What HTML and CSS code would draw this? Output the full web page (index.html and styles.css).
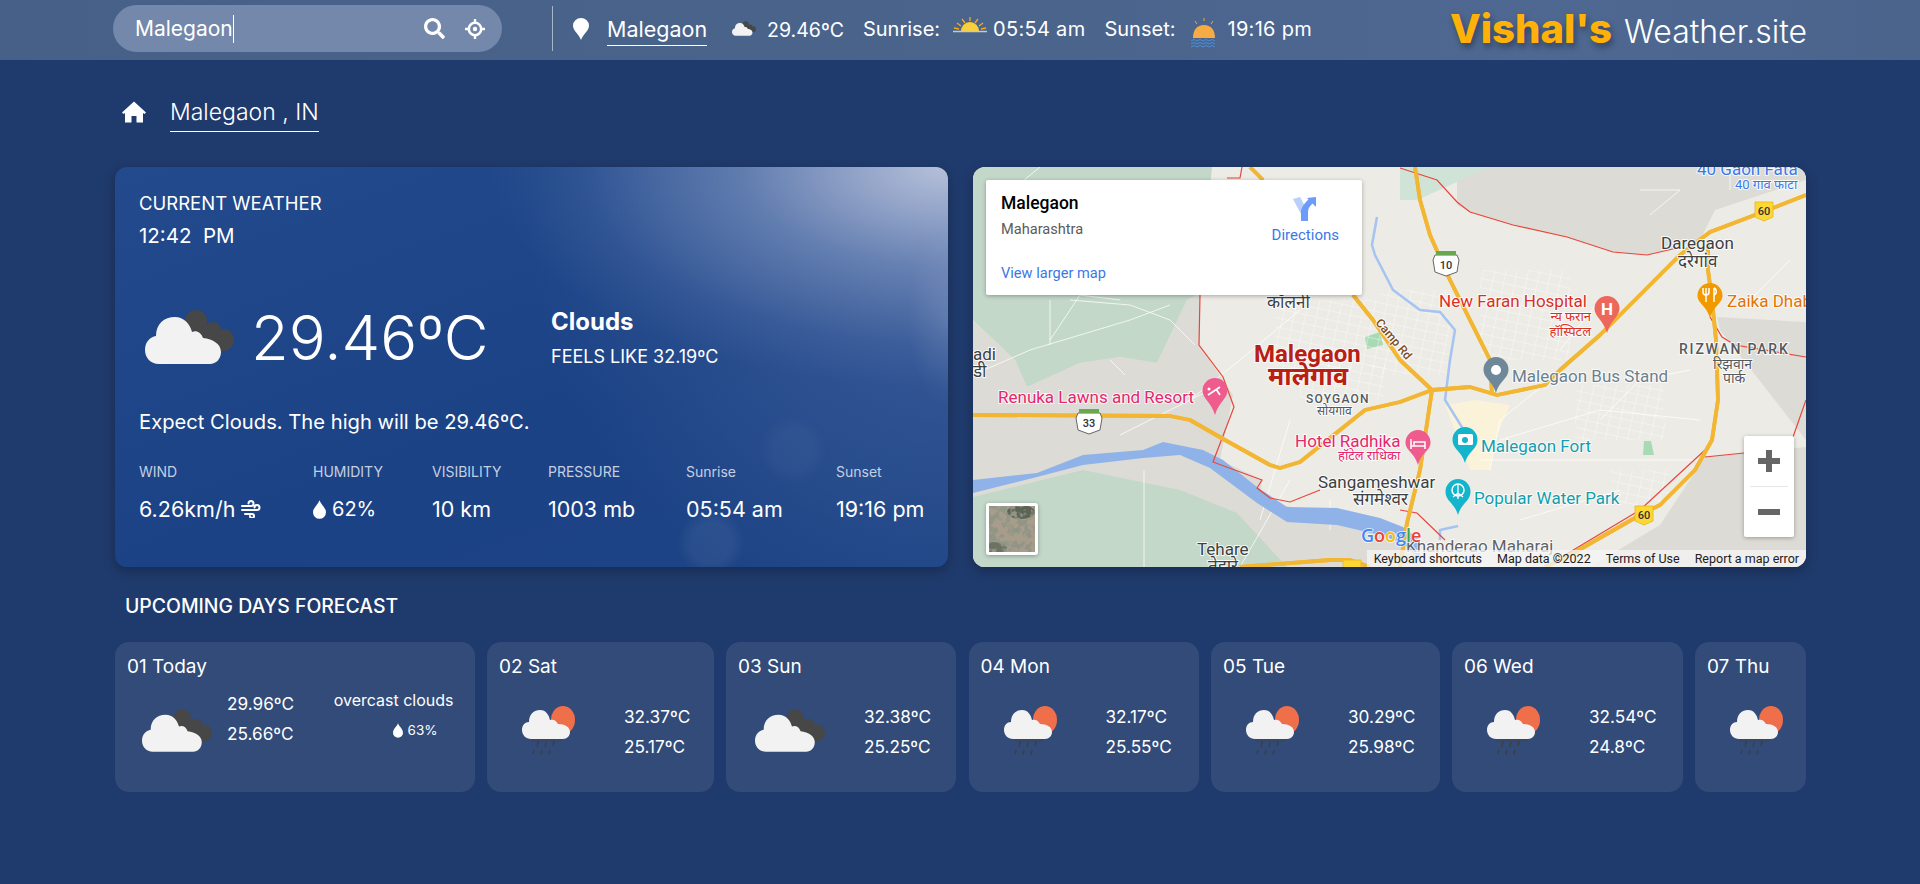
FILE: index.html
```html
<!DOCTYPE html>
<html lang="en">

<head>
    <meta charset="UTF-8">
    <meta name="viewport" content="width=device-width, initial-scale=1.0">
    <title>Vishal's Weather.site</title>
    <link rel="stylesheet" href="styles.css">
</head>

<body>

    <!-- Iconos reutilizados -->
    <svg class="defs" width="0" height="0">
        <symbol id="ic-clouds" viewBox="0 0 89 54">
            <g fill="#474747">
                <circle cx="51" cy="11" r="11"/>
                <circle cx="68" cy="20" r="8"/>
                <circle cx="78" cy="30" r="11"/>
                <circle cx="60" cy="30" r="14"/>
            </g>
            <path fill="#f2f2f2" d="M14 54C5 54 0 47 0 40c0-8 5-13 11-14C11 14 19 7 30 7c9 0 15 7 17 15 4-2 9 0 11 6 10 1 18 6 18 14 0 7-5 12-11 12z"/>
        </symbol>
        <symbol id="ic-rain" viewBox="0 0 53 50">
            <ellipse cx="41" cy="14" rx="12" ry="14" fill="#ef6f4a"/>
            <path fill="#f2f2f2" d="M9 33c-5 0-9-4-9-9 0-5 3-8 7-8C7 8 12 4 18 4c6 0 9 5 10 10 3-1 6 0 8 4 7 0 12 3 12 8 0 4-3 7-7 7z"/>
            <path fill="#3f4656" opacity=".55" d="M8 33h33l-3 3H11z"/>
            <path stroke="#3d3f45" stroke-width="1.500" fill="none" d="M16 35l-1 6M24 36l-1 5M32 35l-1 5M12 44l-1 4M20 44l-1 5M28 44l-1 5"/>
        </symbol>
        <symbol id="ic-drop" viewBox="0 0 14 20">
            <path fill="#fff" d="M7 0c1 4 7 8 7 13a7 7 0 0 1-14 0C0 8 6 4 7 0z"/>
        </symbol>
    </svg>

    <header class="topbar">
        <div class="search">
            <span class="search-text">Malegaon</span><span class="caret"></span>
            <svg class="search-ic" viewBox="0 0 512 512"><path fill="#fff" d="M505 442.7L405.3 343c-4.5-4.5-10.6-7-17-7H372c27.6-35.3 44-79.7 44-128C416 93.1 322.9 0 208 0S0 93.1 0 208s93.1 208 208 208c48.3 0 92.7-16.4 128-44v16.3c0 6.4 2.5 12.5 7 17l99.7 99.7c9.4 9.4 24.6 9.4 33.9 0l28.3-28.3c9.4-9.4 9.4-24.6.1-34zM208 336c-70.7 0-128-57.2-128-128 0-70.7 57.2-128 128-128 70.7 0 128 57.2 128 128 0 70.7-57.2 128-128 128z"/></svg>
            <svg class="locate-ic" viewBox="0 0 20 20"><circle cx="10" cy="10" r="6.2" fill="none" stroke="#fff" stroke-width="2.6"/><circle cx="10" cy="10" r="2.2" fill="#fff"/><path stroke="#fff" stroke-width="2.4" d="M10 0v4M10 16v4M0 10h4M16 10h4"/></svg>
        </div>
        <div class="divider"></div>
        <svg class="pin-ic" viewBox="0 0 16 22"><path fill="#fff" d="M8 22C6 16 0 13 0 7.500a8 7.500 0 0 1 16 0C16 13 10 16 8 22z"/></svg>
        <span class="top-city">Malegaon</span>
        <svg class="top-cloud"><use href="#ic-clouds"/></svg>
        <span class="top-temp">29.46ºC</span>
        <span class="top-label sunrise-label">Sunrise:</span>
        <svg class="sunrise-ic" viewBox="0 0 34 17">
            <path stroke="#f6a81c" stroke-width="1.300" d="M17 1v4M9 3l3 4M25 3l-3 4M4 7l4 3M30 7l-4 3M1 12l5 1M33 12l-5 1"/>
            <path fill="#fbcf3a" d="M8 15a9 9 0 0 1 18 0z"/>
            <path stroke="#c9c9b8" stroke-width="1.300" d="M0 15.500h34"/>
        </svg>
        <span class="top-label sunrise-time">05:54 am</span>
        <span class="top-label sunset-label">Sunset:</span>
        <svg class="sunset-ic" viewBox="0 0 28 31">
            <path stroke="#f2a33a" stroke-width="1" d="M14 0v3M5 3l2 3M23 3l-2 3"/>
            <path fill="#f7ab45" d="M3 20c0-8 4-13 11-13s11 5 11 13z"/>
            <path fill="none" stroke="#4a8fd8" stroke-width="1" d="M1 23l3-1.500 3 1.500 3-1.500 3 1.500 3-1.500 3 1.500 3-1.500 3 1.500M1 26l3-1.500 3 1.500 3-1.500 3 1.500 3-1.500 3 1.500 3-1.500 3 1.500M1 29l3-1.500 3 1.500 3-1.500 3 1.500 3-1.500 3 1.500 3-1.500 3 1.500"/>
        </svg>
        <span class="top-label sunset-time">19:16 pm</span>
        <div class="logo"><b>Vishal's</b> <span>Weather.site</span></div>
    </header>

    <main class="wrap">
        <div class="place">
            <svg class="home-ic" viewBox="0 0 24 24"><path fill="#fff" d="M12 1.500L0 12.500l1.500 1.500L3 13v9.500h6.500V16h5v6.500H21V13l1.500 1 1.500-1.500z"/></svg>
            <span class="place-name">Malegaon , IN</span>
        </div>

        <div class="top-grid">
            <section class="current">
                <div class="current-head">CURRENT WEATHER</div>
                <div class="current-time">12:42&nbsp; PM</div>
                <div class="current-main">
                    <svg class="current-ic"><use href="#ic-clouds"/></svg>
                    <div class="current-temp">29.46ºC</div>
                    <div class="current-desc">
                        <div class="desc-title">Clouds</div>
                        <div class="desc-feels">FEELS LIKE 32.19ºC</div>
                    </div>
                </div>
                <p class="expect">Expect Clouds. The high will be 29.46ºC.</p>
                <div class="stats">
                    <div class="stat stat-wind">
                        <div class="stat-label">WIND</div>
                        <div class="stat-value">6.26km/h
                            <svg class="wind-ic" viewBox="0 0 20 18"><path fill="none" stroke="#fff" stroke-width="2" stroke-linecap="round" d="M1 6h9a2.500 2.500 0 1 0-2.500-2.500M1 10h15a2.500 2.500 0 1 0-2.500-2.500M4 14h7a2 2 0 1 1-2 2"/></svg>
                        </div>
                    </div>
                    <div class="stat stat-hum">
                        <div class="stat-label">HUMIDITY</div>
                        <div class="stat-value stat-hum-value"><svg class="drop-ic"><use href="#ic-drop"/></svg>62%</div>
                    </div>
                    <div class="stat stat-vis">
                        <div class="stat-label">VISIBILITY</div>
                        <div class="stat-value">10 km</div>
                    </div>
                    <div class="stat stat-pres">
                        <div class="stat-label">PRESSURE</div>
                        <div class="stat-value">1003 mb</div>
                    </div>
                    <div class="stat stat-rise">
                        <div class="stat-label">Sunrise</div>
                        <div class="stat-value">05:54 am</div>
                    </div>
                    <div class="stat">
                        <div class="stat-label">Sunset</div>
                        <div class="stat-value">19:16 pm</div>
                    </div>
                </div>
            </section>

            <section class="map">
                <svg class="map-canvas" viewBox="973 167 833 400">
                    <defs>
                        <pattern id="streets" width="11" height="9" patternUnits="userSpaceOnUse" patternTransform="rotate(12)">
                            <path d="M0 0h11M0 0v9" stroke="#fff" stroke-width="1" fill="none"/>
                        </pattern>
                    </defs>
                    <rect x="973" y="167" width="833" height="400" fill="#ecebe5"/>

                    <!-- Zonas de terreno -->
                    <path class="land" d="M973 320L1015 360 1027 387 1080 363 1120 357 1157 363 1187 300 1200 293 1199 345 1233 395 1220 460 1262 480 1260 500 1350 520 1400 530 1425 567H973z"/>
                    <path class="land" d="M1457 167L1457 205 1470 212 1513 225 1567 237 1613 252 1647 255 1700 240 1715 210 1806 180V167z"/>
                    <path class="land" d="M1717 317L1806 322V440L1720 330z"/>
                    <path class="land" d="M1590 567L1660 525 1705 457 1806 447V567z"/>
                    <path class="green" d="M973 167H1212L1200 293 1187 300 1157 363 1120 357 1080 363 1027 387 1015 360 973 320z"/>
                    <path class="green" d="M973 497L1083 470 1180 490 1237 513 1287 567H973z"/>
                    <path class="green-light" d="M1400 167H1490L1417 200H1400z"/>
                    <path class="green-park" d="M1365 337L1380 332 1383 345 1367 349zM1644 441H1651L1654 455H1643z"/>
                    <path class="town" d="M1445 405L1475 400 1510 405 1495 440 1490 470 1470 470 1455 430z"/>

                    <!-- Calles: trama y trazos sueltos -->
                    <rect class="grid" x="1275" y="300" width="105" height="70"/>
                    <rect class="grid" x="1300" y="365" width="85" height="35"/>
                    <rect class="grid" x="1380" y="290" width="70" height="85"/>
                    <rect class="grid" x="1480" y="270" width="90" height="90"/>
                    <rect class="grid" x="1575" y="385" width="90" height="55"/>
                    <rect class="grid" x="1610" y="470" width="60" height="35"/>
                    <path class="minor" d="M973 375L1030 350 1130 320 1170 305M1050 300V345M1070 300L1130 305 1170 320 1195 345M1080 295L1050 340M1190 400L1240 360 1300 310M1110 360L1125 375M1210 390L1170 410 1120 435M1144 470V567M1290 480L1240 567M1290 420L1260 520M1330 500V530M1500 440L1600 410 1700 420M1480 460H1700M1550 380L1500 420 1490 470M1600 300L1560 350M1690 370L1640 380 1600 420M1650 215L1680 190 1640 190M1750 300L1790 260M1730 190V167M1520 520L1620 490M1040 167L1000 200M1000 190H1130M1080 295L1120 300"/>
                    <path class="river-thin" d="M1377 217L1372 245 1375 255 1393 290 1420 310 1440 312 1455 330 1450 360 1445 400 1470 440"/>
                    <path class="river-thin" d="M1440 540L1440 530 1458 526"/>
                    <path class="river" d="M973 480L1037 473 1083 455 1143 450 1163 442 1203 450 1223 460 1257 487 1287 507 1337 508 1380 518 1403 527 1420 540 1420 560 1403 543 1380 535 1337 525 1287 522 1257 503 1210 468 1180 455 1143 458 1083 465 1037 477 973 493z"/>

                    <!-- Límites en rojo -->
                    <path class="limit" d="M1242 167L1240 178H1227M1200 295L1199 345 1223 377 1234 407 1213 462 1262 480 1257 488 1270 498 1290 502 1320 490"/>
                    <path class="limit" d="M1400 168L1437 180 1457 202 1470 212 1513 225 1567 237 1613 252 1647 255 1677 248M1710 317L1722 337 1735 345 1806 357M1705 457L1744 453M1793 437L1806 400M1400 510L1417 513 1445 540M1545 567L1640 510 1705 450"/>

                    <!-- Carreteras: borde naranja y centro claro -->
                    <g id="roads" class="roads">
                        <path d="M973 415L1170 416 1190 420 1225 440 1270 465 1280 468 1300 462 1365 410 1400 402 1432 390 1470 387 1497 395 1545 385 1560 370 1600 335 1680 255 1710 232 1755 215 1806 195"/>
                        <path d="M1708 240L1708 270 1712 300 1716 340 1718 400 1712 440 1695 470 1660 505 1640 515 1570 555 1545 567"/>
                        <path d="M1415 167L1420 200 1430 235 1450 280 1470 320 1490 360 1492 395"/>
                        <path d="M1250 167L1263 180M1353 295L1373 320 1400 360 1432 390 1420 470 1407 523 1400 567"/>
                        <path d="M1240 567L1330 560 1350 560 1370 567"/>
                    </g>
                    <use href="#roads" class="roads-inner"/>

                    <!-- Placas de carretera -->
                    <g class="shield-white">
                        <path d="M1078 413h22l2 5-2 12-11 4-11-4-2-12z"/>
                        <path class="shield-top" d="M1079 409h20v4h-20z"/>
                        <text x="1089" y="427">33</text>
                    </g>
                    <g class="shield-white">
                        <path d="M1435 255h22l2 5-2 12-11 4-11-4-2-12z"/>
                        <path class="shield-top" d="M1436 251h20v4h-20z"/>
                        <text x="1446" y="269">10</text>
                    </g>
                    <g class="shield-yellow">
                        <path d="M1755 202h18v15l-9 4-9-4z"/>
                        <text x="1764" y="215">60</text>
                    </g>
                    <g class="shield-yellow">
                        <path d="M1635 506h18v15l-9 4-9-4z"/>
                        <text x="1644" y="519">60</text>
                    </g>
                    <g class="shield-yellow">
                        <path d="M1343 560h18v15h-18z"/>
                    </g>

                    <!-- Chinchetas -->
                    <g>
                        <path class="pin-pink" d="M1215 378a12.500 12.500 0 0 1 12.500 12.500c0 8-9 12-12.500 24.500-3.500-12.500-12.500-16.500-12.500-24.500A12.500 12.500 0 0 1 1215 378z"/>
                        <path d="M1208 395l12-8M1216 389l4 6" stroke="#fff" stroke-width="1.800" fill="none"/>
                        <circle cx="1209" cy="389" r="1.500" fill="#fff"/>
                        <path class="pin-pink" d="M1418 430a12.500 12.500 0 0 1 12.500 12.500c0 8-9 10-12.500 22.500-3.500-12.500-12.500-14.500-12.500-22.500A12.500 12.500 0 0 1 1418 430z"/>
                        <path d="M1411 439v10M1411 446h14v3M1414 442h11v4h-11z" stroke="#fff" stroke-width="1.500" fill="none"/>
                        <path class="pin-red" d="M1607 296a12.500 12.500 0 0 1 12.500 12.500c0 8-9 12-12.500 24.500-3.500-12.500-12.500-16.500-12.500-24.500A12.500 12.500 0 0 1 1607 296z"/>
                        <text class="pin-h" x="1607" y="315">H</text>
                        <path class="pin-orange" d="M1710 283a12.500 12.500 0 0 1 12.500 12.500c0 8-9 10-12.500 22.500-3.500-12.500-12.500-14.500-12.500-22.500A12.500 12.500 0 0 1 1710 283z"/>
                        <path d="M1706 288v14M1703 288v4a3 3 0 0 0 6 0v-4M1714 288v14M1714 288c3 1 3 6 0 7" stroke="#fff" stroke-width="1.500" fill="none"/>
                        <path class="pin-grey" d="M1496 357a12.500 12.500 0 0 1 12.500 12.500c0 9-9 11-12.500 23.500-3.500-12.500-12.500-14.500-12.500-23.500A12.500 12.500 0 0 1 1496 357z"/>
                        <circle cx="1496" cy="370" r="5" fill="#fff"/>
                        <path class="pin-teal" d="M1465 427a12.500 12.500 0 0 1 12.500 12.500c0 10-9 11-12.500 23.500-3.500-12.500-12.500-13.500-12.500-23.500A12.500 12.500 0 0 1 1465 427z"/>
                        <rect x="1458" y="434" width="15" height="11" rx="1.500" fill="#fff"/>
                        <circle cx="1465" cy="440" r="3" fill="#12b5cb"/>
                        <path class="pin-teal" d="M1458 479a12.500 12.500 0 0 1 12.500 12.500c0 10-9 11-12.500 23.500-3.500-12.500-12.500-13.500-12.500-23.500A12.500 12.500 0 0 1 1458 479z"/>
                        <circle cx="1458" cy="490" r="6" fill="none" stroke="#fff" stroke-width="1.500"/>
                        <path d="M1458 485v14M1453 497l5-4 5 4" stroke="#fff" stroke-width="1.300" fill="none"/>
                    </g>

                    <!-- Etiquetas -->
                    <text class="lb lb-city" x="1254" y="362">Malegaon</text>
                    <text class="lb lb-city-hi" x="1268" y="385">मालेगाव</text>
                    <text class="lb lb-area" x="1306" y="403">SOYGAON</text>
                    <text class="lb lb-area-hi" x="1317" y="415">सोयगाव</text>
                    <text class="lb lb-dark" x="1267" y="308">कॉलनी</text>
                    <text class="lb lb-dark" x="973" y="360">adi</text>
                    <text class="lb lb-dark" x="973" y="377">डी</text>
                    <text class="lb lb-pink" x="998" y="403">Renuka Lawns and Resort</text>
                    <text class="lb lb-pink" x="1295" y="447">Hotel Radhika</text>
                    <text class="lb lb-pink-hi" x="1338" y="460">हॉटेल राधिका</text>
                    <text class="lb lb-dark" x="1318" y="488">Sangameshwar</text>
                    <text class="lb lb-dark" x="1353" y="505">संगमेश्वर</text>
                    <text class="lb lb-dark" x="1197" y="555">Tehare</text>
                    <text class="lb lb-dark" x="1208" y="572">तेहारे</text>
                    <text class="lb lb-grey" x="1406" y="552">Khanderao Maharaj</text>
                    <text class="lb lb-road" transform="translate(1375 323) rotate(50)">Camp Rd</text>
                    <text class="lb lb-red" x="1439" y="307">New Faran Hospital</text>
                    <text class="lb lb-red-hi" x="1591" y="321">न्य फरान</text>
                    <text class="lb lb-red-hi" x="1591" y="336">हॉस्पिटल</text>
                    <text class="lb lb-bus" x="1512" y="382">Malegaon Bus Stand</text>
                    <text class="lb lb-dark" x="1661" y="249">Daregaon</text>
                    <text class="lb lb-dark" x="1678" y="267">दरेगांव</text>
                    <text class="lb lb-blue" x="1697" y="175">40 Gaon Fata</text>
                    <text class="lb lb-blue-hi" x="1735" y="189">40 गाव फाटा</text>
                    <text class="lb lb-orange" x="1727" y="307">Zaika Dhaba</text>
                    <text class="lb lb-area lb-park" x="1679" y="354">RIZWAN PARK</text>
                    <text class="lb lb-area-hi lb-dark-hi" x="1713" y="369">रिझवान</text>
                    <text class="lb lb-area-hi lb-dark-hi" x="1723" y="383">पार्क</text>
                    <text class="lb lb-teal" x="1481" y="452">Malegaon Fort</text>
                    <text class="lb lb-teal" x="1474" y="504">Popular Water Park</text>
                    <text class="lb lb-google" x="1361" y="542"><tspan fill="#4285f4">G</tspan><tspan fill="#ea4335">o</tspan><tspan fill="#fbbc05">o</tspan><tspan fill="#4285f4">g</tspan><tspan fill="#34a853">l</tspan><tspan fill="#ea4335">e</tspan></text>
                </svg>

                <div class="info">
                    <div class="info-left">
                        <div class="info-title">Malegaon</div>
                        <div class="info-sub">Maharashtra</div>
                        <a class="info-link">View larger map</a>
                    </div>
                    <div class="info-dir">
                        <svg class="dir-ic" viewBox="0 0 24 24">
                            <path fill="#b9d0fb" d="M0 2L7 0l7 13-5 6z"/>
                            <path fill="#6c9cf8" d="M8 24h7v-9c0-4 2-6 6-10l-4-4c-5 5-9 9-9 14z"/>
                            <path fill="#6c9cf8" d="M23 0l-9 1 9 9z"/>
                        </svg>
                        <span>Directions</span>
                    </div>
                </div>

                <div class="thumb">
                    <svg viewBox="0 0 46 46" width="46" height="46">
                        <filter id="sat"><feTurbulence type="fractalNoise" baseFrequency=".14" numOctaves="3" seed="7"/><feColorMatrix values="0 0 0 0 .28  0 0 0 0 .3  0 0 0 0 .24  7 0 0 0 -3.200"/></filter>
                        <rect width="46" height="46" fill="#a89d8b"/>
                        <ellipse cx="32" cy="6" rx="14" ry="7" fill="#5d6355"/>
                        <ellipse cx="6" cy="42" rx="12" ry="6" fill="#6d7363"/>
                        <rect width="46" height="46" filter="url(#sat)"/>
                    </svg>
                </div>

                <div class="zoom-ctl">
                    <button class="zoom-btn"><svg viewBox="0 0 22 22" width="22" height="22"><path fill="#666" d="M8 0h6v8h8v6h-8v8H8v-8H0V8h8z"/></svg></button>
                    <div class="zoom-line"></div>
                    <button class="zoom-btn"><svg viewBox="0 0 22 22" width="22" height="22"><path fill="#666" d="M0 8h22v6H0z"/></svg></button>
                </div>

                <div class="attrib">
                    <span>Keyboard shortcuts</span>
                    <span>Map data ©2022</span>
                    <span>Terms of Use</span>
                    <span>Report a map error</span>
                </div>
            </section>
        </div>

        <h2 class="forecast-title">UPCOMING DAYS FORECAST</h2>

        <div class="forecast">
            <div class="day day-today">
                <div class="day-name">01 Today</div>
                <div class="day-body">
                    <svg class="day-ic-big"><use href="#ic-clouds"/></svg>
                    <div class="temps">
                        <span>29.96ºC</span>
                        <span>25.66ºC</span>
                    </div>
                    <div class="today-extra">
                        <span>overcast clouds</span>
                        <span class="today-hum"><svg class="drop-small"><use href="#ic-drop"/></svg>63%</span>
                    </div>
                </div>
            </div>
            <div class="day">
                <div class="day-name">02 Sat</div>
                <div class="day-body day-rainy">
                    <svg class="day-ic"><use href="#ic-rain"/></svg>
                    <div class="temps"><span>32.37ºC</span><span>25.17ºC</span></div>
                </div>
            </div>
            <div class="day">
                <div class="day-name">03 Sun</div>
                <div class="day-body day-cloudy">
                    <svg class="day-ic-big"><use href="#ic-clouds"/></svg>
                    <div class="temps"><span>32.38ºC</span><span>25.25ºC</span></div>
                </div>
            </div>
            <div class="day">
                <div class="day-name">04 Mon</div>
                <div class="day-body day-rainy">
                    <svg class="day-ic"><use href="#ic-rain"/></svg>
                    <div class="temps"><span>32.17ºC</span><span>25.55ºC</span></div>
                </div>
            </div>
            <div class="day">
                <div class="day-name">05 Tue</div>
                <div class="day-body day-rainy">
                    <svg class="day-ic"><use href="#ic-rain"/></svg>
                    <div class="temps"><span>30.29ºC</span><span>25.98ºC</span></div>
                </div>
            </div>
            <div class="day">
                <div class="day-name">06 Wed</div>
                <div class="day-body day-rainy">
                    <svg class="day-ic"><use href="#ic-rain"/></svg>
                    <div class="temps"><span>32.54ºC</span><span>24.8ºC</span></div>
                </div>
            </div>
            <div class="day">
                <div class="day-name">07 Thu</div>
                <div class="day-body day-rainy">
                    <svg class="day-ic"><use href="#ic-rain"/></svg>
                </div>
            </div>
        </div>
    </main>

</body>

</html>
```

FILE: styles.css
```css
/* Reset */
* {
    margin: 0;
    padding: 0;
    box-sizing: border-box;
}

body {
    height: 884px;
    overflow: hidden;
    background-color: #1f3a6c;
    color: #fff;
    font-family: "Inter", "Noto Sans", sans-serif;
}

.defs {
    position: absolute;
}

/* Barra superior */
.topbar {
    height: 60px;
    display: flex;
    align-items: center;
    padding: 0 0 3px 113px;
    background: linear-gradient(90deg, #466088 0%, #4a648c 55%, #4e6892 80%, #4a648c 100%);
}

.search {
    width: 389px;
    height: 47px;
    display: flex;
    align-items: center;
    padding: 0 17px 0 22px;
    border-radius: 24px;
    background-color: #7388aa;
    font-size: 21px;
}

.caret {
    width: 1px;
    height: 28px;
    background-color: #fff;
}

.search-ic {
    width: 21px;
    height: 21px;
    margin-left: auto;
}

.locate-ic {
    width: 20px;
    height: 20px;
    margin-left: 20px;
}

.divider {
    width: 1px;
    height: 45px;
    margin-left: 50px;
    background-color: #a9b5c9;
}

.pin-ic {
    width: 16px;
    height: 22px;
    margin-left: 20px;
}

.top-city {
    margin: 4px 0 0 18px;
    padding-bottom: 3px;
    border-bottom: 1px solid #fff;
    font-size: 21.500px;
}

.top-cloud {
    width: 24px;
    height: 15px;
    margin-left: 25px;
}

.top-temp {
    margin-left: 11px;
    font-size: 19.500px;
    padding-top: 3px;
}

.top-label {
    font-size: 20px;
}

.sunrise-label {
    margin-left: 19px;
}

.sunrise-ic {
    width: 34px;
    height: 17px;
    margin: 0 6px 8px 13px;
}

.sunrise-time,
.sunset-time {
    font-size: 20px;
    letter-spacing: .3px;
}

.sunset-label {
    margin-left: 19px;
}

.sunset-ic {
    width: 28px;
    height: 31px;
    margin: 9px 9px 0 15px;
}

.logo {
    margin-left: auto;
    margin-right: 113px;
    font-size: 32px;
    font-weight: 300;
    white-space: nowrap;
}

.logo b {
    margin-right: 3px;
    font-size: 40px;
    font-weight: 800;
    color: #ffb10a;
    text-shadow: 2px 4px 6px rgba(0, 0, 0, .35);
}

/* Contenido */
.wrap {
    margin: 0 114px 0 115px;
}

.place {
    height: 41px;
    margin-top: 31px;
    display: flex;
    align-items: center;
}

.home-ic {
    width: 24px;
    height: 24px;
    margin-left: 7px;
}

.place-name {
    margin: 7px 0 0 24px;
    padding-bottom: 5px;
    border-bottom: 1px solid #fff;
    font-size: 23px;
    font-weight: 300;
}

.top-grid {
    display: grid;
    grid-template-columns: 833px 833px;
    column-gap: 25px;
    margin-top: 35px;
}

/* Tarjeta principal */
.current {
    height: 400px;
    padding: 25px 24px 0;
    border-radius: 12px;
    box-shadow: 0 4px 12px rgba(0, 0, 0, .25);
    background:
        radial-gradient(circle 34px at 596px 376px, rgba(255, 255, 255, .06) 60%, transparent 100%),
        radial-gradient(circle 34px at 678px 283px, rgba(255, 255, 255, .03) 60%, transparent 100%),
        radial-gradient(ellipse 40px 90px at 100% 150px, rgba(220, 220, 240, .14) 0%, transparent 100%),
        radial-gradient(ellipse 460px 220px at 100% 0%, rgba(235, 235, 245, .7) 0%, rgba(200, 210, 235, .32) 45%, rgba(150, 170, 215, .1) 80%, transparent 100%),
        radial-gradient(ellipse 420px 400px at 100% 15%, rgba(140, 160, 205, .3) 0%, rgba(140, 160, 205, .12) 60%, transparent 100%),
        linear-gradient(160deg, #224a8c 0%, #1b4285 60%, #1e4485 100%);
}

.current-head {
    font-size: 18.500px;
    line-height: 22px;
}

.current-time {
    margin-top: 10px;
    font-size: 20.500px;
    line-height: 24px;
}

.current-main {
    display: flex;
    align-items: center;
    height: 54px;
    margin-top: 62px;
}

.current-ic {
    width: 89px;
    height: 54px;
    margin-left: 6px;
}

.current-temp {
    width: 300px;
    margin-left: 17px;
    font-size: 61.500px;
    font-weight: 300;
}

.desc-title {
    font-size: 24px;
    font-weight: 700;
    line-height: 29px;
}

.desc-feels {
    margin-top: 10px;
    font-size: 18px;
    line-height: 22px;
}

.expect {
    margin-top: 46px;
    font-size: 20.200px;
    line-height: 24px;
}

.stats {
    display: flex;
    margin-top: 29px;
}

.stat {
    flex: none;
}

.stat-wind { width: 174px; }
.stat-hum { width: 119px; }
.stat-vis { width: 116px; }
.stat-pres { width: 138px; }
.stat-rise { width: 150px; }

.stat-label {
    font-size: 14px;
    line-height: 17px;
    color: #c5cfe2;
}

.stat-value {
    display: flex;
    align-items: center;
    margin-top: 16px;
    font-size: 21.500px;
    line-height: 26px;
}

.stat-hum-value {
    font-size: 20px;
}

.wind-ic {
    width: 20px;
    height: 18px;
    margin-left: 6px;
}

.drop-ic {
    width: 13px;
    height: 19px;
    margin-right: 6px;
}

/* Mapa */
.map {
    position: relative;
    height: 400px;
    border-radius: 12px;
    overflow: hidden;
    box-shadow: 0 4px 12px rgba(0, 0, 0, .25);
}

.map-canvas {
    display: block;
    width: 833px;
    height: 400px;
    font-family: "Roboto", "Noto Sans", sans-serif;
}

.land { fill: #dddbd5; }
.green { fill: #c3d8c9; }
.green-light { fill: #cfe3d6; }
.green-park { fill: #a8dab5; }
.town { fill: #fbf3d9; }
.grid { fill: url(#streets); opacity: .7; }

.minor {
    fill: none;
    stroke: #fff;
    stroke-width: 1;
    opacity: .75;
}

.river { fill: #8fb3e8; }

.river-thin {
    fill: none;
    stroke: #a4c4f2;
    stroke-width: 2.5;
}

.limit {
    fill: none;
    stroke: #e8463a;
    stroke-width: 1.2;
}

.roads {
    fill: none;
    stroke: #f2b632;
    stroke-width: 3.800;
    stroke-linejoin: round;
}

.roads-inner {
    stroke: #fde8a6;
    stroke-width: 2.200;
}

.shield-white path { fill: #fff; stroke: #666; stroke-width: 1; }
.shield-white .shield-top { fill: #6aa84f; stroke: none; }
.shield-white text,
.shield-yellow text {
    font-size: 11px;
    font-weight: 500;
    text-anchor: middle;
    fill: #333;
}
.shield-yellow path { fill: #fdd835; stroke: #e5b81c; stroke-width: .8; }

.pin-pink { fill: #ef5b8d; }
.pin-red { fill: #ee675c; }
.pin-orange { fill: #f29900; }
.pin-grey { fill: #6f8899; }
.pin-teal { fill: #12b5cb; }

.pin-h {
    font-size: 17px;
    font-weight: 700;
    fill: #fff;
    text-anchor: middle;
}

.lb {
    paint-order: stroke;
    stroke: #fff;
    stroke-width: 2px;
    stroke-opacity: .85;
    font-size: 17px;
}

.lb-city { font-size: 24px; font-weight: 700; fill: #b92015; }
.lb-city-hi { font-size: 25px; font-weight: 700; fill: #b92015; }
.lb-area { font-size: 12px; font-weight: 500; letter-spacing: 1.200px; fill: #55595e; }
.lb-park { font-size: 14px; letter-spacing: 1.800px; }
.lb-area-hi { font-size: 12px; fill: #55595e; }
.lb-dark-hi { font-size: 14px; }
.lb-dark { fill: #3c4043; }
.lb-grey { fill: #5f6368; }
.lb-pink { fill: #e5266e; }
.lb-pink-hi { font-size: 13px; fill: #e5266e; }
.lb-red { fill: #d93025; }
.lb-red-hi { font-size: 13px; fill: #d93025; text-anchor: end; }
.lb-bus { fill: #6c7f8e; }
.lb-blue { fill: #3b78e7; }
.lb-blue-hi { font-size: 13px; fill: #3b78e7; }
.lb-orange { fill: #e37400; }
.lb-teal { fill: #129eaf; }
.lb-road { font-size: 12px; font-weight: 500; fill: #7a4a1a; }
.lb-google { font-size: 18px; font-family: "Open Sans", sans-serif; font-weight: 600; stroke-width: 1.500px; }

.info {
    position: absolute;
    left: 13px;
    top: 13px;
    width: 376px;
    height: 115px;
    display: flex;
    justify-content: space-between;
    padding: 11px 23px 0 15px;
    border-radius: 2px;
    background-color: #fff;
    box-shadow: 0 1px 4px rgba(0, 0, 0, .3);
    font-family: "Roboto", sans-serif;
}

.info-title {
    font-size: 17.500px;
    font-weight: 500;
    line-height: 24px;
    color: #000;
}

.info-sub {
    margin-top: 4px;
    font-size: 14.600px;
    line-height: 20px;
    color: #5b5b5b;
}

.info-link {
    display: block;
    margin-top: 24px;
    font-size: 14.600px;
    line-height: 20px;
    color: #3b78e7;
}

.info-dir {
    display: flex;
    flex-direction: column;
    align-items: center;
    padding-top: 6px;
    font-size: 15px;
    color: #3b78e7;
}

.dir-ic {
    width: 24px;
    height: 24px;
    margin-bottom: 5px;
}

.thumb {
    position: absolute;
    left: 13px;
    top: 336px;
    width: 52px;
    height: 52px;
    border: 3px solid #fff;
    border-radius: 3px;
    overflow: hidden;
    box-shadow: 0 1px 4px rgba(0, 0, 0, .3);
}

.thumb svg {
    display: block;
}

.zoom-ctl {
    position: absolute;
    left: 771px;
    top: 269px;
    width: 50px;
    height: 101px;
    display: flex;
    flex-direction: column;
    border-radius: 2px;
    background-color: #fff;
    box-shadow: 0 1px 4px rgba(0, 0, 0, .3);
}

.zoom-btn {
    flex: 1;
    display: flex;
    align-items: center;
    justify-content: center;
    border: none;
    background: none;
}

.zoom-line {
    height: 1px;
    margin: 0 6px;
    background-color: #e6e6e6;
}

.attrib {
    position: absolute;
    right: 0;
    bottom: 0;
    display: flex;
    height: 17px;
    align-items: center;
    gap: 15px;
    padding: 0 7px;
    background-color: rgba(245, 245, 245, .75);
    font-family: "Roboto", sans-serif;
    font-size: 12.500px;
    color: #222;
    white-space: nowrap;
}

/* Pronóstico */
.forecast-title {
    margin: 29px 0 0 10px;
    font-size: 19.400px;
    font-weight: 500;
    line-height: 20px;
}

.forecast {
    display: grid;
    grid-template-columns: 359.500px 226.500px 230px 230px 228.500px 230.500px 111px;
    column-gap: 12.500px;
    margin-top: 26px;
}

.day {
    height: 150px;
    padding: 14px 12px 0;
    border-radius: 14px;
    background-color: #324b78;
    overflow: hidden;
}

.day-name {
    font-size: 19px;
    line-height: 22px;
}

.day-body {
    display: flex;
    align-items: flex-start;
    margin-top: 19px;
    font-size: 17.200px;
}

.day-ic-big {
    flex: none;
    width: 70px;
    height: 43px;
    margin-top: 12px;
}

.day-ic {
    flex: none;
    width: 53px;
    height: 50px;
    margin-top: 9px;
    margin-left: 23px;
    filter: blur(.4px);
}

.temps {
    display: flex;
    flex-direction: column;
    gap: 11px;
    line-height: 19px;
}

.day-today .temps {
    margin-left: 15px;
    margin-top: -3.500px;
}

.day-today .day-ic-big {
    margin-left: 15px;
}

.day-rainy .temps {
    margin-top: 9.500px;
    margin-left: 49px;
}

.day-cloudy .day-ic-big {
    margin-left: 17px;
}

.day-cloudy .temps {
    margin-top: 9.500px;
    margin-left: 39px;
}

.today-extra {
    display: flex;
    flex-direction: column;
    align-items: flex-end;
    gap: 12px;
    margin: -6px 9px 0 auto;
    font-size: 16px;
    line-height: 18px;
}

.today-hum {
    display: flex;
    align-items: center;
    margin-right: 16px;
    font-size: 13.500px;
}

.drop-small {
    width: 10px;
    height: 15px;
    margin-right: 5px;
}
```
